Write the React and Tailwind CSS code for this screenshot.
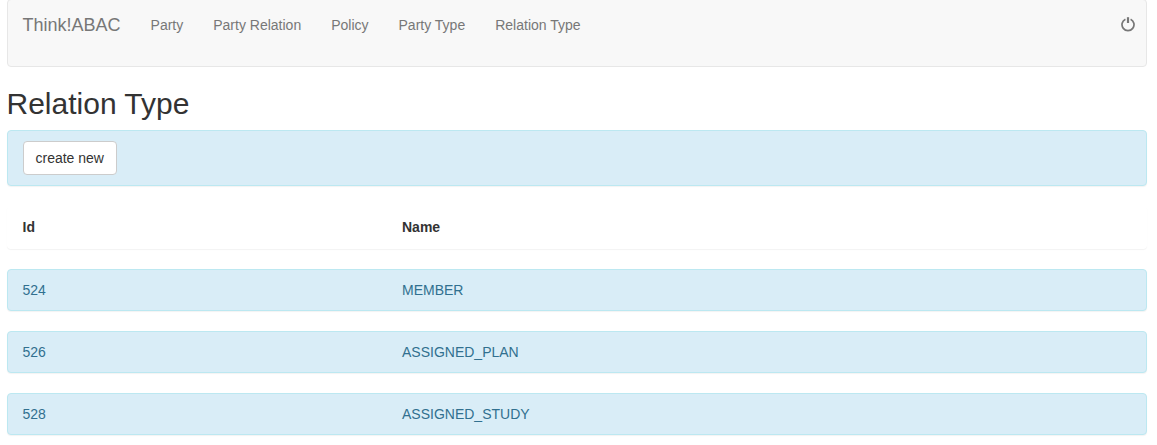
const links = ["Party", "Party Relation", "Policy", "Party Type", "Relation Type"];
const rows = [
  { id: 524, name: "MEMBER" },
  { id: 526, name: "ASSIGNED_PLAN" },
  { id: 528, name: "ASSIGNED_STUDY" },
];

function PowerIcon() {
  return (
    <svg className="h-[15px] w-[14px]" viewBox="0 0 14 15" fill="none" stroke="#777" strokeWidth="1.7">
      <path d="M4.4 2.2A6 6 0 1 0 9.6 2.2" />
      <path d="M7 0.2V6" strokeWidth="2.2" />
    </svg>
  );
}

function Navbar() {
  return (
    <nav className="-mt-px flex h-[68px] items-start rounded-[4px] border border-[#e7e7e7] bg-[#f8f8f8] text-[#777]">
      <a className="pl-[14.5px] pr-[15px] pt-[15px] text-[18px] leading-5">Think!ABAC</a>
      <ul className="flex grow">
        {links.map((link) => (
          <li key={link} className="px-[15px] pt-[15px] leading-5">{link}</li>
        ))}
      </ul>
      <button className="mr-[11.5px] mt-[17px]" aria-label="Log out"><PowerIcon /></button>
    </nav>
  );
}

function Row({ id, name }) {
  return (
    <div className="flex h-[42px] items-center rounded-[4px] border border-[#bce8f1] bg-[#d9edf7] px-[14.5px] text-[#31708f] shadow-[0_1px_1px_rgba(0,0,0,0.05)]">
      <span className="w-[379.5px]">{id}</span>
      <span>{name}</span>
    </div>
  );
}

export default function App() {
  return (
    <main className="flow-root h-[445px] overflow-hidden bg-white pl-[7px] pr-[10px] font-['Liberation_Sans',Arial,sans-serif] text-[14px] leading-5 text-[#333]">
      <Navbar />
      <h1 className="-ml-[0.5px] mt-5 text-[30px] leading-[33px]">Relation Type</h1>
      <div className="mt-[10px] flex h-[56px] items-start rounded-[4px] border border-[#bce8f1] bg-[#d9edf7] px-[15px] pt-[10px] shadow-[0_1px_1px_rgba(0,0,0,0.05)]">
        <button className="h-[34px] w-[94px] rounded-[4px] border border-[#ccc] bg-white pl-[11.5px] text-left">create new</button>
      </div>
      <div className="mt-5 flex h-[43px] items-start rounded-[4px] border border-transparent bg-white px-[14.5px] pt-[10px] font-bold shadow-[0_1px_1px_rgba(0,0,0,0.05)]">
        <span className="w-[379.5px]">Id</span>
        <span>Name</span>
      </div>
      <div className="mt-5 flex flex-col gap-5">
        {rows.map((row) => <Row key={row.id} {...row} />)}
      </div>
    </main>
  );
}
